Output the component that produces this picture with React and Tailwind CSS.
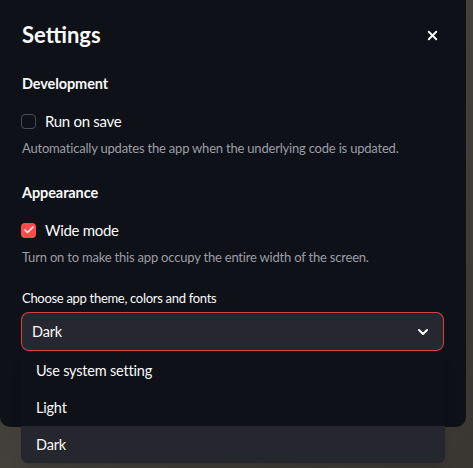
import { Check, ChevronDown, X } from 'lucide-react';

function Checkbox({ checked, label }) {
  return (
    <label className="flex items-center gap-[9px] h-[24px]">
      {checked ? (
        <span className="w-[15px] h-[15px] rounded-[4px] bg-[#ff4b4b] flex items-center justify-center">
          <Check className="w-[12px] h-[12px] text-white" strokeWidth={3} />
        </span>
      ) : (
        <span className="w-[15px] h-[15px] rounded-[4px] border border-[#4a4d57] bg-[#0e1117]" />
      )}
      <span className="text-[15px] tracking-[-0.3px] text-[#fafafa]">{label}</span>
    </label>
  );
}

const options = ['Use system setting', 'Light', 'Dark'];

export default function App() {
  return (
    <div
      className="relative w-full h-[468px] overflow-hidden bg-gradient-to-br from-[#2a2c30] via-[#44413b] to-[#3a3631]"
      style={{ fontFamily: 'Lato, "Noto Sans", sans-serif' }}
    >
      {/* Dialog */}
      <div className="w-[466px] h-[427px] bg-[#0e1117] rounded-br-[10px] rounded-bl-[10px] pl-[21px] pr-[22px] pt-[21px]">
        <div className="flex items-center justify-between">
          <h2 className="pl-[1px] text-[22px] font-bold text-[#fafafa] leading-[28px]">Settings</h2>
          <X className="w-[15px] h-[15px] text-[#fafafa] mr-[4px]" strokeWidth={3} />
        </div>

        <h3 className="pl-[1px] mt-[25px] text-[14.5px] tracking-[-0.1px] font-bold text-[#fafafa] leading-[20px]">Development</h3>
        <div className="mt-[15px]">
          <Checkbox checked={false} label="Run on save" />
        </div>
        <p className="pl-[1px] mt-[6px] text-[13px] tracking-[-0.2px] text-[#9c9ea6] leading-[18px]">
          Automatically updates the app when the underlying code is updated.
        </p>

        <h3 className="pl-[1px] mt-[26px] text-[14.5px] tracking-[-0.1px] font-bold text-[#fafafa] leading-[20px]">Appearance</h3>
        <div className="mt-[15px]">
          <Checkbox checked label="Wide mode" />
        </div>
        <p className="pl-[1px] mt-[6px] text-[13px] tracking-[-0.2px] text-[#9c9ea6] leading-[18px]">
          Turn on to make this app occupy the entire width of the screen.
        </p>

        <p className="pl-[1px] mt-[23px] text-[13px] tracking-[-0.3px] text-[#fafafa] leading-[18px]">Choose app theme, colors and fonts</p>
        <div className="mt-[5px] h-[39px] rounded-[8px] border border-[#ff4b4b]/80 bg-[#262730] flex items-center justify-between pl-[10px] pr-[12px]">
          <span className="text-[14.5px] tracking-[-0.2px] text-[#fafafa]">Dark</span>
          <ChevronDown className="w-[16px] h-[16px] text-[#fafafa]" strokeWidth={3} />
        </div>
      </div>

      {/* Dropdown menu */}
      <div className="absolute left-[21px] top-[352px] w-[424px] rounded-b-[8px] bg-[#0e1117] shadow-lg overflow-hidden">
        {options.map((opt) => (
          <div
            key={opt}
            className={`h-[37px] flex items-center px-[15px] text-[14.5px] tracking-[-0.2px] text-[#fafafa] ${opt === 'Dark' ? 'bg-[#25262e]' : ''}`}
          >
            {opt}
          </div>
        ))}
      </div>
    </div>
  );
}
